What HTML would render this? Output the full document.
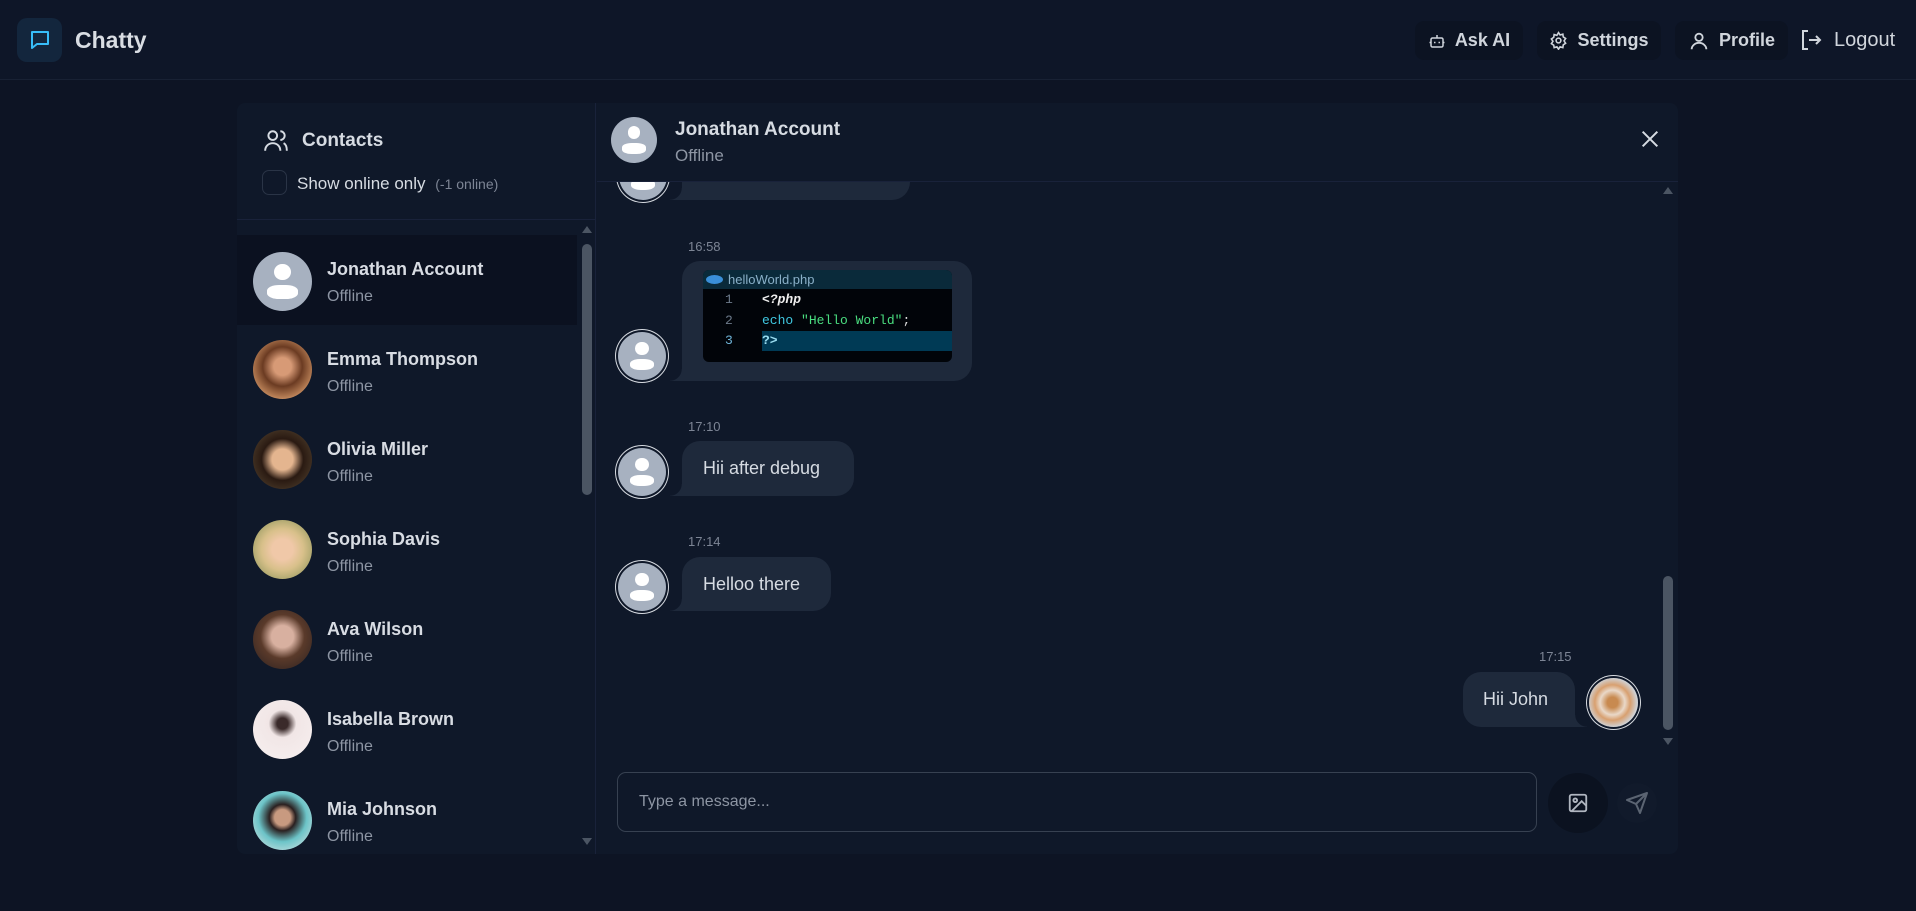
<!DOCTYPE html>
<html><head><meta charset="utf-8"><style>
*{box-sizing:border-box;margin:0;padding:0}
body{width:1916px;height:911px;background:#0d1424;font-family:"Liberation Sans",sans-serif;color:#d6dbe2;position:relative;overflow:hidden}
.abs{position:absolute}
nav{position:absolute;left:0;top:0;width:1916px;height:80px;background:#0e1628;border-bottom:1px solid #182134}
.logo{left:17px;top:18px;width:45px;height:44px;border-radius:10px;background:#13263d;display:flex;align-items:center;justify-content:center}
.brand{left:75px;top:27px;font-size:23px;font-weight:bold;color:#d9dde3}
.btn{top:21px;height:39px;border-radius:9px;background:#0c1322;display:flex;align-items:center;justify-content:center;gap:9px;font-size:18px;font-weight:bold;color:#d0d5dc}
.panel{left:237px;top:103px;width:1441px;height:751px;background:#0f1829;border-radius:8px}
.side{left:237px;top:103px;width:359px;height:751px;border-right:1px solid #19223a}
.row{position:absolute;left:237px;width:340px;height:90px}
.av{position:absolute;width:59px;height:59px;border-radius:50%;overflow:hidden}
.name{position:absolute;left:327px;font-size:18px;font-weight:bold;color:#d8dce3}
.st{position:absolute;left:327px;font-size:16px;color:#8d95a3}
.def{background:#a7b1c0}
.def:before{content:"";position:absolute;left:36%;top:20%;width:28%;height:28%;border-radius:50%;background:#fff}
.def:after{content:"";position:absolute;left:24%;top:56%;width:52%;height:24%;border-radius:40%;background:#fff}
.ring{box-shadow:0 0 0 2px #0f1829,0 0 0 3px #d5d9df}
.bub{position:absolute;background:#1e293b;border-radius:18px;font-size:18px;color:#d6dbe2;display:flex;align-items:center}
.tl:before{content:"";position:absolute;left:-12px;bottom:0;width:12px;height:12px;background:radial-gradient(circle at 0 0,transparent 11.5px,#1e293b 12px)}
.tr:before{content:"";position:absolute;right:-12px;bottom:0;width:12px;height:12px;background:radial-gradient(circle at 100% 0,transparent 11.5px,#1e293b 12px)}
.time{position:absolute;font-size:13px;color:#7d8595}
.code{font-family:"Liberation Mono",monospace;font-size:13px}
</style></head><body>
<nav></nav>
<div class="abs logo"><svg width="24" height="24" viewBox="0 0 24 24" fill="none" stroke="#38bdf8" stroke-width="2" stroke-linejoin="round"><path d="M4 4h16v12H9l-5 4z"/></svg></div>
<div class="abs brand">Chatty</div>
<div class="abs btn" style="left:1415px;width:108px"><svg width="18" height="18" viewBox="0 0 24 24" fill="none" stroke="#d0d5dc" stroke-width="2"><rect x="4" y="8" width="16" height="12" rx="2"/><path d="M12 8V4M2 14h2M20 14h2M9 13v2M15 13v2"/></svg>Ask AI</div>
<div class="abs btn" style="left:1537px;width:124px"><svg width="19" height="19" viewBox="0 0 24 24" fill="none" stroke="#d0d5dc" stroke-width="2"><circle cx="12" cy="12" r="3"/><path d="M12 2l2 3 3.5-1 .5 3.5 3 2-2 3 2 3-3 2-.5 3.5-3.5-1-2 3-2-3-3.5 1L6 18l-3-2 2-3-2-3 3-2 .5-3.5 3.5 1z"/></svg>Settings</div>
<div class="abs btn" style="left:1675px;width:113px"><svg width="22" height="22" viewBox="0 0 24 24" fill="none" stroke="#d0d5dc" stroke-width="2"><circle cx="12" cy="8" r="4"/><path d="M4 21c0-4 4-7 8-7s8 3 8 7"/></svg>Profile</div>
<div class="abs" style="left:1799px;top:28px"><svg width="24" height="24" viewBox="0 0 24 24" fill="none" stroke="#d0d5dc" stroke-width="2"><path d="M9 3H4v18h5M10 12h11M17 8l4 4-4 4"/></svg></div>
<div class="abs" style="left:1834px;top:29px;font-size:20px;color:#d0d5dc">Logout</div>

<div class="abs panel"></div>
<div class="abs side"></div>
<div class="abs" style="left:237px;top:219px;width:359px;border-top:1px solid #19223a"></div>
<div class="abs" style="left:263px;top:128px"><svg width="26" height="26" viewBox="0 0 24 24" fill="none" stroke="#d6dbe2" stroke-width="1.8"><circle cx="9" cy="7" r="4"/><path d="M2 21c0-4 3-7 7-7s7 3 7 7M16 3a4 4 0 010 8M19 14c2 1 3 4 3 7"/></svg></div>
<div class="abs" style="left:302px;top:130px;font-size:19px;font-weight:bold">Contacts</div>
<div class="abs" style="left:262px;top:170px;width:25px;height:25px;border:1.5px solid #2a3446;border-radius:7px"></div>
<div class="abs" style="left:297px;top:174px;font-size:17px">Show online only <span style="font-size:14px;color:#7d8595;margin-left:5px">(-1 online)</span></div>
<div class="abs" style="left:582px;top:226px;border:5px solid transparent;border-bottom:7px solid #4b5563;border-top:0;width:0"></div>
<div class="abs" style="left:582px;top:244px;width:10px;height:251px;border-radius:5px;background:#4b5563"></div>
<div class="abs" style="left:582px;top:838px;border:5px solid transparent;border-top:7px solid #4b5563;border-bottom:0;width:0"></div>

<div class="row" style="top:235px;background:#0b1120"></div>
<div class="av def" style="left:253px;top:252px"></div><div class="name" style="top:259px">Jonathan Account</div><div class="st" style="top:288px">Offline</div>
<div class="av" style="left:253px;top:340px;background:radial-gradient(circle at 50% 45%,#d79a76 20%,#6b3b22 45%,#c48a5e 75%,#e8c8c0)"></div><div class="name" style="top:349px">Emma Thompson</div><div class="st" style="top:378px">Offline</div>
<div class="av" style="left:253px;top:430px;background:radial-gradient(circle at 50% 50%,#e4b58f 25%,#2a1a12 50%,#5a4a35)"></div><div class="name" style="top:439px">Olivia Miller</div><div class="st" style="top:468px">Offline</div>
<div class="av" style="left:253px;top:520px;background:radial-gradient(circle at 50% 50%,#f0c8a8 25%,#d8c08a 50%,#7c8a50)"></div><div class="name" style="top:529px">Sophia Davis</div><div class="st" style="top:558px">Offline</div>
<div class="av" style="left:253px;top:610px;background:radial-gradient(circle at 50% 45%,#d8b0a0 25%,#5a3a2a 50%,#2a2020)"></div><div class="name" style="top:619px">Ava Wilson</div><div class="st" style="top:648px">Offline</div>
<div class="av" style="left:253px;top:700px;background:radial-gradient(circle at 50% 40%,#3a2a2a 12%,#f1e6e6 30%,#f7f0f0)"></div><div class="name" style="top:709px">Isabella Brown</div><div class="st" style="top:738px">Offline</div>
<div class="av" style="left:253px;top:791px;background:radial-gradient(circle at 50% 45%,#c89a80 18%,#2a2020 30%,#6cc4c8 55%,#e8e8e8)"></div><div class="name" style="top:799px">Mia Johnson</div><div class="st" style="top:828px">Offline</div>

<div class="abs" style="left:597px;top:181px;width:1081px;border-top:1px solid #19223a"></div>
<div class="av def" style="left:611px;top:117px;width:46px;height:46px"></div>
<div class="abs" style="left:675px;top:119px;font-size:19px;font-weight:bold">Jonathan Account</div>
<div class="abs" style="left:675px;top:146px;font-size:17px;color:#8d95a3">Offline</div>
<div class="abs" style="left:1639px;top:128px"><svg width="22" height="22" viewBox="0 0 24 24" fill="none" stroke="#d6dbe2" stroke-width="2.2"><path d="M4 4l16 16M20 4L4 20"/></svg></div>

<div class="abs" style="left:597px;top:182px;width:1060px;height:200px;overflow:hidden">
 <div class="bub tl" style="left:85px;top:-40px;width:228px;height:58px;border-bottom-left-radius:0"></div>
 <div class="av def ring" style="left:22px;top:-30px;width:48px;height:48px"></div>
</div>
<div class="time" style="left:688px;top:239px">16:58</div>
<div class="bub tl" style="left:682px;top:261px;width:290px;height:120px;border-bottom-left-radius:0"></div>
<div class="abs code" style="left:703px;top:270px;width:249px;height:92px;background:#010409;border-radius:6px;overflow:hidden">
 <div style="height:19px;background:#0a2a3a;color:#8ab0c8;font-family:'Liberation Sans',sans-serif;font-size:13px;padding:2px 0 0 25px;position:relative"><span style="position:absolute;left:3px;top:5px;width:17px;height:9px;border-radius:50%;background:#3a8fd8"></span>helloWorld.php</div>
 <div style="position:relative;height:21px;line-height:21px"><span style="position:absolute;left:22px;color:#6c7a8a">1</span><span style="position:absolute;left:59px;color:#eee;font-style:italic;font-weight:bold">&lt;?php</span></div>
 <div style="position:relative;height:21px;line-height:21px"><span style="position:absolute;left:22px;color:#6c7a8a">2</span><span style="position:absolute;left:59px;color:#3fc7e0">echo <span style="color:#4ade80">"Hello World"</span><span style="color:#ddd">;</span></span></div>
 <div style="position:relative;height:20px;line-height:20px"><span style="position:absolute;left:22px;color:#6fb4d8">3</span><span style="position:absolute;left:59px;right:0;top:0;height:20px;background:#003a55;color:#9adcf0;font-weight:bold">?&gt;</span></div>
</div>
<div class="av def ring" style="left:618px;top:332px;width:48px;height:48px"></div>

<div class="time" style="left:688px;top:419px">17:10</div>
<div class="bub tl" style="left:682px;top:441px;width:172px;height:55px;padding-left:21px;border-bottom-left-radius:0">Hii after debug</div>
<div class="av def ring" style="left:618px;top:448px;width:48px;height:48px"></div>

<div class="time" style="left:688px;top:534px">17:14</div>
<div class="bub tl" style="left:682px;top:557px;width:149px;height:54px;padding-left:21px;border-bottom-left-radius:0">Helloo there</div>
<div class="av def ring" style="left:618px;top:563px;width:48px;height:48px"></div>

<div class="time" style="left:1539px;top:649px">17:15</div>
<div class="bub tr" style="left:1463px;top:672px;width:112px;height:55px;padding-left:20px;border-bottom-right-radius:0">Hii John</div>
<div class="av ring" style="left:1589px;top:678px;width:49px;height:49px;background:radial-gradient(circle at 48% 50%,#c88a50 15%,#e9d8c8 35%,#d8a070 50%,#cfd2d6 70%)"></div>

<div class="abs" style="left:1663px;top:187px;border:5px solid transparent;border-bottom:7px solid #4b5563;border-top:0;width:0"></div>
<div class="abs" style="left:1663px;top:576px;width:10px;height:154px;border-radius:5px;background:#4b5563"></div>
<div class="abs" style="left:1663px;top:738px;border:5px solid transparent;border-top:7px solid #4b5563;border-bottom:0;width:0"></div>

<div class="abs" style="left:617px;top:772px;width:920px;height:60px;border:1px solid #374151;border-radius:9px;padding:0 0 0 21px;display:flex;align-items:center;font-size:16px;color:#8d95a3">Type a message...</div>
<div class="abs" style="left:1548px;top:773px;width:60px;height:60px;border-radius:50%;background:#0b1220;display:flex;align-items:center;justify-content:center"><svg width="22" height="22" viewBox="0 0 24 24" fill="none" stroke="#b0b6c0" stroke-width="2"><rect x="3" y="3" width="18" height="18" rx="2"/><circle cx="9" cy="9" r="2"/><path d="M21 15l-5-5L5 21"/></svg></div>
<div class="abs" style="left:1617px;top:783px;width:40px;height:40px;border-radius:50%;background:#111a2b;display:flex;align-items:center;justify-content:center"><svg width="24" height="24" viewBox="0 0 24 24" fill="none" stroke="#5b6472" stroke-width="2" stroke-linejoin="round"><path d="M22 2L2 9l9 4 4 9z M11 13l11-11"/></svg></div>
</body></html>
